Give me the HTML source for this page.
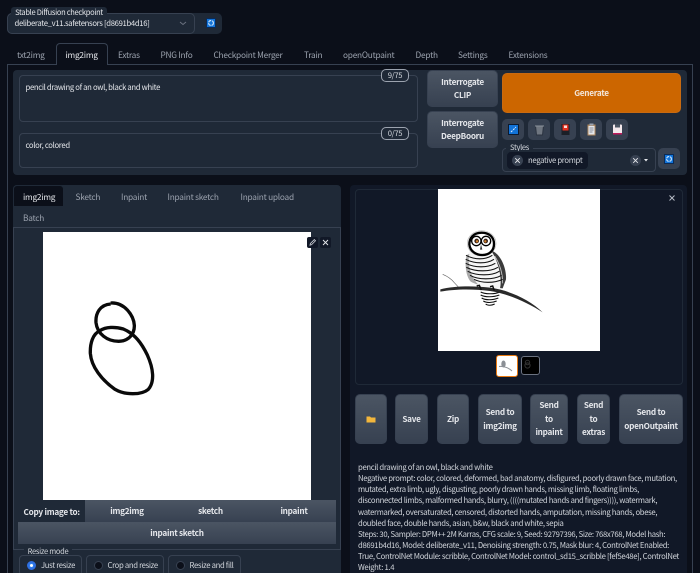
<!DOCTYPE html>
<html><head><meta charset="utf-8">
<style>
*{box-sizing:border-box}
html,body{margin:0;padding:0;width:700px;height:573px;overflow:hidden;background:#0b0f19}
body{position:relative;font-family:"Noto Sans CJK JP","Liberation Sans",sans-serif;font-size:7.7px;letter-spacing:-.32px;color:#e5e7eb}
.a{position:absolute}
.t{position:absolute;white-space:nowrap;line-height:12px}
.tab{color:#9ca3af;font-size:8.3px;letter-spacing:-.24px;transform:translateY(-50%)}
.btn{position:absolute;background:linear-gradient(to bottom,#4b5563,#374151);border:1px solid #374151;border-radius:5px;color:#e5e7eb;font-weight:700;font-size:8.2px;letter-spacing:-.26px;line-height:13.4px;display:flex;align-items:center;justify-content:center;text-align:center;padding-top:1px}
.ic{position:absolute;background:#374151;border-radius:5px;display:flex;align-items:center;justify-content:center}
.box{position:absolute;border:1px solid #374151;border-radius:4px}
.lab{position:absolute;background:#1f2937;border-radius:3px;color:#d1d5db;font-size:7.5px;letter-spacing:-.3px;line-height:11px;text-align:center;white-space:nowrap}
.radio{position:absolute;top:555px;height:21px;background:#1f2937;border:1px solid #374151;border-radius:4px;color:#d1d5db;font-size:7.7px;line-height:19px;white-space:nowrap}
.radio i{position:absolute;left:7px;top:4.500px;width:9px;height:9px;border-radius:50%;background:#0b0f19;border:1px solid #374151}
.radio span{position:absolute;left:20px;top:0}
</style></head><body>

<!-- checkpoint -->
<div class="a" style="left:7px;top:13px;width:215px;height:21px;background:#1f2937;border-radius:5px"></div>
<div class="box" style="left:7px;top:13px;width:188px;height:21px;border-radius:5px"></div>
<div class="lab" style="left:11px;top:7px;width:96px;height:11px;color:#e5e7eb">Stable Diffusion checkpoint</div>
<div class="t" style="left:14.5px;top:17.5px;color:#e5e7eb">deliberate_v11.safetensors [d8691b4d16]</div>
<svg class="a" style="left:179px;top:21px" width="8" height="5"><path d="M1 1l3 2.500L7 1" stroke="#6b7280" fill="none"/></svg>
<div class="a" style="left:206px;top:18px;width:10px;height:10px;background:#1273d8;border:1px solid #0b2a55"><svg width="8" height="8" style="display:block"><circle cx="4" cy="4" r="2.4" stroke="#cfe6fb" stroke-width="1.1" fill="none" stroke-dasharray="3.2 .8"/></svg></div>

<!-- tabs -->
<div class="t tab" style="left:17px;top:54.5px">txt2img</div>
<div class="a" style="left:56px;top:43px;width:52px;height:22px;background:#0b0f19;border:1px solid #374151;border-bottom:none;border-radius:4px 4px 0 0;z-index:2"></div>
<div class="t tab" style="left:65.5px;top:54.5px;color:#e5e7eb;z-index:3">img2img</div>
<div class="t tab" style="left:118px;top:54.5px">Extras</div>
<div class="t tab" style="left:160.5px;top:54.5px">PNG Info</div>
<div class="t tab" style="left:213.5px;top:54.5px">Checkpoint Merger</div>
<div class="t tab" style="left:304px;top:54.5px">Train</div>
<div class="t tab" style="left:343px;top:54.5px">openOutpaint</div>
<div class="t tab" style="left:415.5px;top:54.5px">Depth</div>
<div class="t tab" style="left:458px;top:54.5px">Settings</div>
<div class="t tab" style="left:508.5px;top:54.5px">Extensions</div>
<div class="a" style="left:7px;top:64px;width:686px;height:520px;border:1px solid #374151"></div>

<!-- top panel -->
<div class="a" style="left:13px;top:70px;width:674px;height:105px;background:#1f2937;border-radius:4px"></div>
<div class="box" style="left:19px;top:75px;width:399px;height:47px"></div>
<div class="box" style="left:19px;top:133px;width:399px;height:35px"></div>
<div class="t" style="left:25.5px;top:81.5px;color:#e5e7eb">pencil drawing of an owl, black and white</div>
<div class="t" style="left:25.5px;top:139.5px;color:#e5e7eb">color, colored</div>
<div class="a" style="left:381px;top:69px;width:28px;height:13px;background:#1f2937;border:1px solid #9ca3af;border-radius:5px;line-height:11px;text-align:center;color:#d1d5db">9/75</div>
<div class="a" style="left:381px;top:127px;width:28px;height:13px;background:#1f2937;border:1px solid #9ca3af;border-radius:5px;line-height:11px;text-align:center;color:#d1d5db">0/75</div>

<div class="btn" style="left:427px;top:70px;width:71px;height:37px">Interrogate<br>CLIP</div>
<div class="btn" style="left:427px;top:111px;width:71px;height:37px">Interrogate<br>DeepBooru</div>
<div class="btn" style="left:502px;top:73px;width:179px;height:40px;background:#cc6600;border:1px solid #c96a10;color:#f3e6d8">Generate</div>

<div class="ic" style="left:502px;top:119px;width:22px;height:21px"><svg width="11" height="11"><rect x=".5" y=".5" width="10" height="10" fill="#1273d8" stroke="#0b1a30"/><path d="M3 8l5-5" stroke="#dbeafe" stroke-dasharray="2 1"/></svg></div>
<div class="ic" style="left:528px;top:119px;width:22px;height:21px"><svg width="11" height="12"><path d="M1.500 2h8L8.500 11h-6z" fill="#6f7680" stroke="#2b3340"/><path d="M1 2h9" stroke="#8b929b"/></svg></div>
<div class="ic" style="left:554px;top:119px;width:22px;height:21px"><svg width="11" height="13"><rect x="1.500" y="1" width="8" height="11" fill="#1b1f27"/><rect x="2.500" y="1.500" width="6" height="6" fill="#e4301f"/><rect x="4" y="2.500" width="3" height="2.500" fill="#f8ddd6"/></svg></div>
<div class="ic" style="left:580px;top:119px;width:22px;height:21px"><svg width="11" height="13"><rect x="1.500" y="1.500" width="8" height="11" fill="#b18a60"/><rect x="2.500" y="3" width="6" height="8.500" fill="#e5e7eb"/><path d="M3.500 5h4M3.500 7h4M3.500 9h3" stroke="#6b7280" stroke-width=".7"/><rect x="3.500" y=".5" width="4" height="2" fill="#9ca3af"/></svg></div>
<div class="ic" style="left:606px;top:119px;width:22px;height:21px"><svg width="11" height="13"><rect x="1" y="1.500" width="9" height="10" rx="1" fill="#f3e8ec"/><rect x="3" y="1.500" width="5" height="3" fill="#4b5563"/><rect x="1" y="10" width="9" height="1.500" fill="#c2185b"/></svg></div>

<div class="box" style="left:502px;top:148px;width:154px;height:24px"></div>
<div class="lab" style="left:506px;top:142px;width:27px;height:12px">Styles</div>
<div class="a" style="left:506px;top:151px;width:83px;height:19px;background:#111827;border:1px solid #1f2937;border-radius:5px"></div>
<div class="a" style="left:512px;top:155px;width:11px;height:11px;background:#374151;border-radius:50%"></div>
<svg class="a" style="left:512px;top:155px" width="11" height="11"><path d="M3.200 3.200l4.600 4.600M7.800 3.200l-4.600 4.600" stroke="#e5e7eb" stroke-width=".9"/></svg>
<div class="t" style="left:528px;top:154.500px;color:#d1d5db">negative prompt</div>
<div class="a" style="left:630px;top:155px;width:11px;height:11px;background:#374151;border-radius:50%"></div>
<svg class="a" style="left:630px;top:155px" width="11" height="11"><path d="M3.200 3.200l4.600 4.600M7.800 3.200l-4.600 4.600" stroke="#e5e7eb" stroke-width=".9"/></svg>
<svg class="a" style="left:643px;top:158px" width="6" height="5"><path d="M1 1h4L3 3.500z" fill="#e5e7eb"/></svg>
<div class="ic" style="left:658px;top:148px;width:22px;height:21px"><div style="width:10px;height:10px;background:#1273d8;border:1px solid #0b2a55"><svg width="8" height="8" style="display:block"><circle cx="4" cy="4" r="2.4" stroke="#cfe6fb" stroke-width="1.1" fill="none" stroke-dasharray="3.2 .8"/></svg></div></div>

<!-- left panel -->
<div class="a" style="left:13px;top:185px;width:328px;height:388px;background:#1f2937;border-radius:4px 4px 0 0"></div>
<div class="a" style="left:13px;top:185px;width:51px;height:22px;background:#0b0f19;border-radius:4px 4px 0 0;border:1px solid #1f2937"></div>
<div class="t tab" style="left:23px;top:196.5px;color:#e5e7eb">img2img</div>
<div class="t tab" style="left:75.5px;top:196.5px">Sketch</div>
<div class="t tab" style="left:121px;top:196.5px">Inpaint</div>
<div class="t tab" style="left:167.5px;top:196.5px">Inpaint sketch</div>
<div class="t tab" style="left:240.5px;top:196.5px">Inpaint upload</div>
<div class="t tab" style="left:23px;top:217.5px">Batch</div>
<div class="a" style="left:13px;top:227px;width:328px;height:323px;border:1px solid #374151"></div>
<div class="a" style="left:43px;top:232px;width:268px;height:268px;background:#fff"></div>
<svg class="a" style="left:0;top:180px" width="350" height="230" viewBox="0 0 1050 690">
<path d="M332 372C300 374 286 400 288 428C292 462 322 484 356 484C385 484 404 462 403 436C401 405 372 366 332 369" fill="none" stroke="#0a0a0a" stroke-width="10"/>
<path d="M300 452C278 462 270 490 271 520C274 560 305 600 345 628C375 646 425 645 445 628C465 605 460 565 442 525C425 490 405 462 370 447C345 440 318 440 300 452" fill="none" stroke="#0a0a0a" stroke-width="10"/>
</svg>
<div class="a" style="left:307px;top:237px;width:11px;height:11px;background:#111827;border-radius:2px"></div>
<svg class="a" style="left:307px;top:237px" width="11" height="11"><path d="M3 8.200l.4-1.700L7.300 2.600l1.200 1.200L4.600 7.700z" fill="none" stroke="#d1d5db" stroke-width=".8"/></svg>
<div class="a" style="left:320px;top:237px;width:11px;height:11px;background:#111827;border-radius:2px"></div>
<svg class="a" style="left:320px;top:237px" width="11" height="11"><path d="M3 3l5 5M8 3l-5 5" stroke="#e5e7eb" stroke-width=".9"/></svg>

<div class="t" style="left:23.5px;top:505.5px;font-size:8.2px;font-weight:700;letter-spacing:-.26px;color:#e5e7eb">Copy image to:</div>
<div class="btn" style="left:85px;top:500px;width:84px;height:22px;border:none;border-radius:0">img2img</div>
<div class="btn" style="left:169px;top:500px;width:83px;height:22px;border:none;border-radius:0">sketch</div>
<div class="btn" style="left:252px;top:500px;width:84px;height:22px;border:none;border-radius:0">inpaint</div>
<div class="btn" style="left:18px;top:522px;width:318px;height:22px;border:none;border-radius:0">inpaint sketch</div>

<div class="lab" style="left:24px;top:546px;width:48px;height:11px">Resize mode</div>
<div class="radio" style="left:19px;width:63px"><i style="background:#2f80ed;border:2px solid #2f6fe0"></i><i style="left:10px;top:7.500px;width:3px;height:3px;background:#fff;border:none"></i><span style="left:21px">Just resize</span></div>
<div class="radio" style="left:86px;width:78px"><i></i><span style="left:20.500px">Crop and resize</span></div>
<div class="radio" style="left:168px;width:73px"><i></i><span style="left:20.500px">Resize and fill</span></div>

<!-- right panel -->
<div class="a" style="left:350px;top:185px;width:337px;height:388px;background:#111827;border-radius:4px 4px 0 0"></div>
<div class="box" style="left:355px;top:189px;width:328px;height:196px;border-color:#1f2937"></div>
<div class="a" style="left:438px;top:189px;width:162px;height:162px;background:#fff"></div>
<svg class="a" style="left:350px;top:180px" width="350" height="210" viewBox="0 0 1050 630">
<defs><filter id="b"><feGaussianBlur stdDeviation=".6"/></filter></defs>
<g filter="url(#b)">
<path d="M425 212C452 222 470 265 468 298L458 325L430 322L420 225z" fill="#3a3a3a"/>
<path d="M434 228C448 250 458 280 458 310M428 240C440 260 448 290 448 315" stroke="#ccc" stroke-width="2.500" fill="none"/>
<path d="M360 210C344 235 344 280 358 300C375 318 420 330 450 325C458 290 440 235 425 215z" fill="#f6f6f6"/>
<path d="M350 225C344 250 346 285 362 305C372 310 378 312 385 314C362 290 352 255 358 222z" fill="#aaa"/>
<g stroke="#111" stroke-width="3.200" fill="none">
<path d="M348 226C375 240 405 240 427 226M347 238C375 252 410 252 432 238M347 250C375 264 412 264 436 250M349 262C378 276 420 276 444 262M353 274C380 288 425 288 448 274M360 286C385 300 430 300 455 286M372 298C395 310 432 310 458 298"/>
<path d="M392 336C405 343 435 343 450 336M392 345C405 352 430 352 448 345M395 354C406 361 428 361 445 354M400 363C410 369 426 369 440 363M407 372C413 377 424 377 434 372"/>
</g>
<ellipse cx="395" cy="190" rx="43" ry="38" fill="#fff" stroke="#bbb" stroke-width="2"/>
<path d="M395 158C370 158 358 174 358 193C360 215 380 225 397 225C418 225 432 212 432 192C432 172 418 158 395 158z" fill="#fff" stroke="#000" stroke-width="7"/>
<circle cx="379" cy="183" r="14" fill="#fff" stroke="#000" stroke-width="4"/>
<circle cx="408" cy="183" r="14" fill="#fff" stroke="#000" stroke-width="4"/>
<circle cx="380" cy="183" r="7" fill="#3a2418"/><circle cx="407" cy="183" r="7" fill="#3a2418"/>
<circle cx="381" cy="184" r="3.500" fill="#d0802c"/><circle cx="406" cy="184" r="3.500" fill="#d0802c"/>
<path d="M393 193l-3 16 7 0z" fill="#333"/>
<path d="M278 283C295 290 305 298 313 308L326 322" stroke="#666" stroke-width="2" fill="none"/>
<path d="M271 328C310 318 370 317 420 323C480 331 540 360 578 397C540 372 480 342 420 333C370 326 310 327 271 335z" fill="#2a2a2a"/>
<path d="M380 318l8 -2l6 14M420 320l8 -2l5 14" stroke="#111" stroke-width="4.500" fill="none"/>
</g>
</svg>
<svg class="a" style="left:668px;top:194px" width="9" height="9"><path d="M1.500 1.500l5 5M6.500 1.500l-5 5" stroke="#b6bcc6" stroke-width="1"/></svg>
<div class="a" style="left:496px;top:355px;width:22px;height:22px;background:#fff;border:1.500px solid #ea7a10;border-radius:3px"><svg width="19" height="19" style="display:block"><ellipse cx="6.500" cy="8" rx="2.200" ry="3.500" fill="#8b8f95"/><path d="M2 10.500C7 10 12 12 15 15" stroke="#8b8f95" fill="none"/></svg></div>
<div class="a" style="left:521px;top:356px;width:19px;height:19px;background:#000;border:1px solid #6b7280;border-radius:3px"><svg width="17" height="17" style="display:block"><circle cx="5.500" cy="5.500" r="2.200" stroke="#333" fill="none"/><circle cx="5.500" cy="8.500" r="2.600" stroke="#333" fill="none"/></svg></div>

<div class="btn" style="left:355px;top:394px;width:32px;height:50px"><svg width="10" height="7"><path d="M.5 .5h3.500l1 1h4.500v5h-9z" fill="#f2b63c"/></svg></div>
<div class="btn" style="left:395px;top:394px;width:33px;height:50px">Save</div>
<div class="btn" style="left:437px;top:394px;width:32px;height:50px">Zip</div>
<div class="btn" style="left:478px;top:394px;width:44px;height:50px">Send to<br>img2img</div>
<div class="btn" style="left:530px;top:394px;width:38px;height:50px">Send<br>to<br>inpaint</div>
<div class="btn" style="left:577px;top:394px;width:33px;height:50px">Send<br>to<br>extras</div>
<div class="btn" style="left:619px;top:394px;width:64px;height:50px">Send to<br>openOutpaint</div>

<div class="a" style="left:358px;top:462px;width:332px;line-height:11.15px;color:#d1d5db;white-space:nowrap">pencil drawing of an owl, black and white<br>Negative prompt: color, colored, deformed, bad anatomy, disfigured, poorly drawn face, mutation,<br>mutated, extra limb, ugly, disgusting, poorly drawn hands, missing limb, floating limbs,<br>disconnected limbs, malformed hands, blurry, ((((mutated hands and fingers)))), watermark,<br>watermarked, oversaturated, censored, distorted hands, amputation, missing hands, obese,<br>doubled face, double hands, asian, b&amp;w, black and white, sepia<br>Steps: 30, Sampler: DPM++ 2M Karras, CFG scale: 9, Seed: 92797396, Size: 768x768, Model hash:<br>d8691b4d16, Model: deliberate_v11, Denoising strength: 0.75, Mask blur: 4, ControlNet Enabled:<br>True, ControlNet Module: scribble, ControlNet Model: control_sd15_scribble [fef5e48e], ControlNet<br>Weight: 1.4</div>

</body></html>
